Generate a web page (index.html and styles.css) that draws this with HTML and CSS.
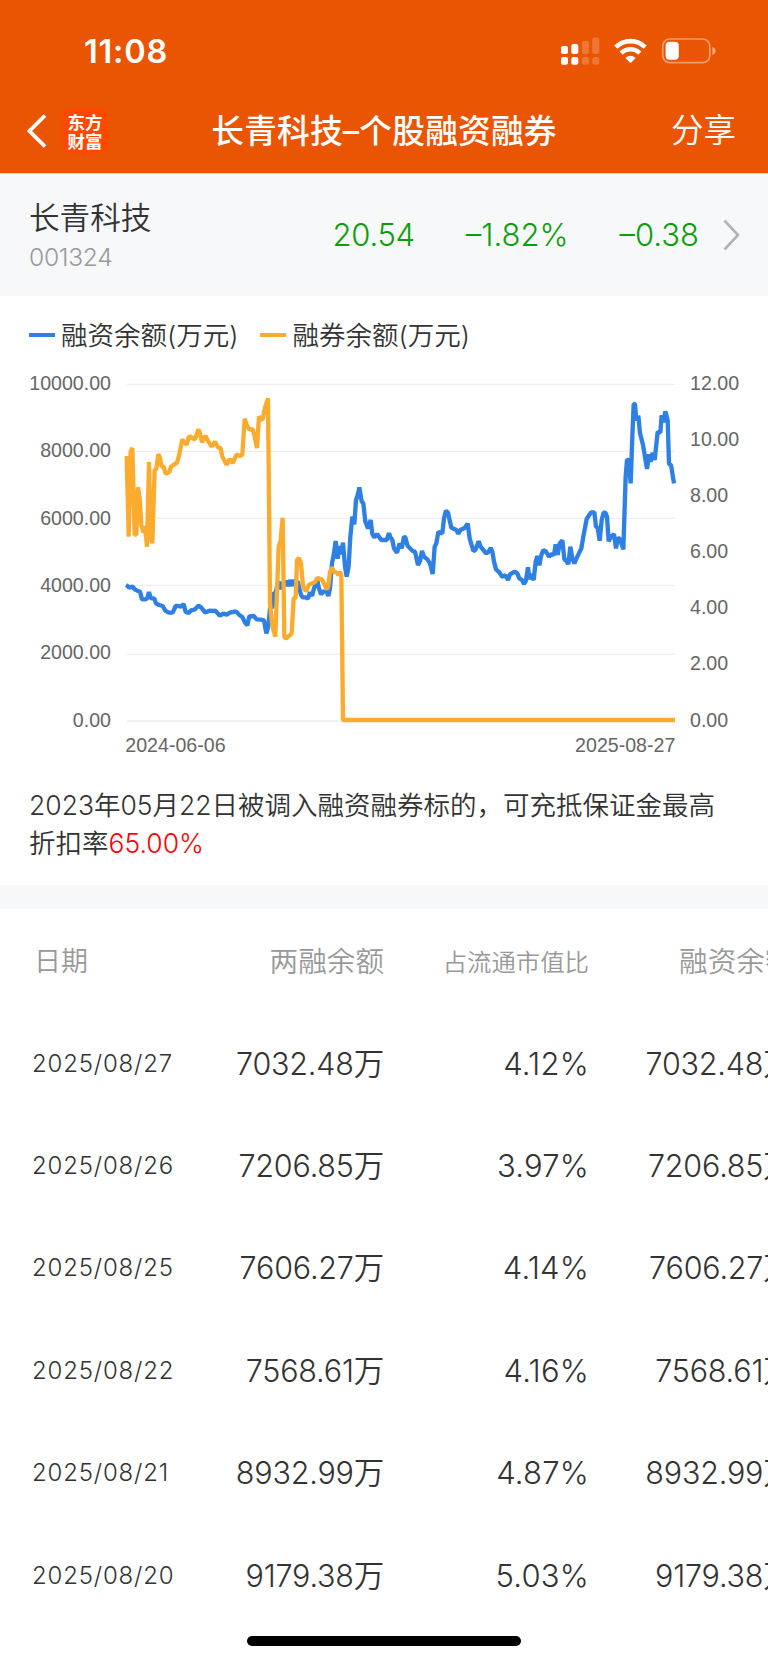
FILE: index.html
```html
<!DOCTYPE html>
<html lang="zh-CN">
<head>
    <meta charset="UTF-8">
    <meta name="viewport" content="width=device-width, initial-scale=1.0">
    <title>长青科技-个股融资融券</title>
    <link rel="stylesheet" href="styles.css">
</head>
<body>
    <header class="header">
        <div class="status-bar">
            <span class="status-time">11:08</span>
            <svg class="status-icons" viewBox="0 0 156 28" width="156" height="28">
                <!-- 信号 -->
                <g fill="#fff">
                    <rect x="0" y="9" width="7" height="8" rx="2"/>
                    <rect x="10.3" y="7" width="7" height="10" rx="2"/>
                    <rect x="0" y="20" width="7" height="7.7" rx="2"/>
                    <rect x="10.3" y="20" width="7" height="7.7" rx="2"/>
                </g>
                <g fill="#fff" fill-opacity=".2">
                    <rect x="21" y="4" width="7" height="13" rx="2"/>
                    <rect x="31.3" y="0.5" width="7" height="16.5" rx="2"/>
                    <rect x="21" y="20" width="7" height="7.7" rx="2"/>
                    <rect x="31.3" y="20" width="7" height="7.7" rx="2"/>
                </g>
                <!-- WiFi -->
                <g fill="none" stroke="#fff" stroke-width="4.6">
                    <path d="M54.8 10.1 A21 21 0 0 1 84.2 10.1"/>
                    <path d="M60.2 16.1 A13.2 13.2 0 0 1 78.8 16.1"/>
                </g>
                <path d="M64.4 21 Q69.5 16.6 74.6 21 L70.2 25.5 Q69.5 26.1 68.8 25.5 Z" fill="#fff"/>
                <!-- 电池 -->
                <rect x="101.8" y="2" width="47" height="23.6" rx="7" fill="none" stroke="#fff" stroke-opacity=".42" stroke-width="1.7"/>
                <rect x="104.6" y="4.8" width="13.2" height="18" rx="4" fill="#fff"/>
                <path d="M151.4 10 Q154.6 11.2 154.6 14 Q154.6 16.8 151.4 18 Z" fill="#fff" fill-opacity=".5"/>
            </svg>
        </div>
        <nav class="nav">
            <svg class="back" viewBox="0 0 20 34" width="20" height="34">
                <path d="M18 1.5 L2.5 17 L18 32.5" fill="none" stroke="#fff" stroke-width="3.8"/>
            </svg>
            <div class="logo"><span>东方</span><span>财富</span></div>
            <h1 class="title">长青科技–个股融资融券</h1>
            <span class="share">分享</span>
        </nav>
    </header>

    <section class="stock">
        <div class="stock-info">
            <div class="stock-name">长青科技</div>
            <div class="stock-code">001324</div>
        </div>
        <span class="quote price">20.54</span>
        <span class="quote percent">–1.82%</span>
        <span class="quote change">–0.38</span>
        <svg class="arrow" viewBox="0 0 17 32" width="17" height="32">
            <path d="M1.5 1.5 L15 16 L1.5 30.5" fill="none" stroke="#b3b3b3" stroke-width="2.6"/>
        </svg>
    </section>

    <section class="chart-card">
        <div class="legend">
            <span class="legend-item rz">融资余额(万元)</span>
            <span class="legend-item rq">融券余额(万元)</span>
        </div>
        <svg class="chart" viewBox="0 0 2304 1170">
            <g class="grid">
                <path d="M381 43H2025M381 244H2025M381 445H2025M381 646H2025M381 853H2025M381 1053H2025"/>
            </g>
            <g class="axis" text-anchor="end">
                <text x="333" y="60">10000.00</text>
                <text x="333" y="262">8000.00</text>
                <text x="333" y="464">6000.00</text>
                <text x="333" y="666">4000.00</text>
                <text x="333" y="868">2000.00</text>
                <text x="333" y="1070">0.00</text>
            </g>
            <g class="axis">
                <text x="2070" y="60">12.00</text>
                <text x="2070" y="228">10.00</text>
                <text x="2070" y="396">8.00</text>
                <text x="2070" y="565">6.00</text>
                <text x="2070" y="733">4.00</text>
                <text x="2070" y="901">2.00</text>
                <text x="2070" y="1070">0.00</text>
                <text x="376" y="1146">2024-06-06</text>
                <text x="2026" y="1146" text-anchor="end">2025-08-27</text>
            </g>
            <!-- 融资余额 -->
            <polyline class="line-rz" points="378,645 383,648 387,653 398,650 404,658 412,662 420,665 426,688 437,688 442,684 447,666 452,684 463,686 468,700 477,705 488,708 496,722 506,728 518,728 527,708 535,708 544,710 551,702 557,726 566,729 573,721 585,718 595,707 604,713 615,727 630,722 638,723 646,722 660,737 670,731 680,734 690,728 708,724 718,735 727,741 735,758 742,766 748,739 762,738 770,748 782,749 792,751 799,790 805,770 810,715 818,710 820,672 827,668 833,640 838,636 843,658 850,636 854,648 860,632 865,648 870,630 876,648 881,630 887,640 893,634 898,655 903,675 908,682 918,682 924,686 930,667 936,678 942,655 952,632 957,655 963,673 970,664 980,666 985,678 990,655 996,580 1001,555 1007,513 1013,566 1018,528 1023,553 1029,518 1035,590 1040,620 1046,588 1051,500 1057,440 1063,463 1068,390 1073,376 1078,352 1085,394 1090,400 1096,455 1104,475 1112,450 1117,492 1123,502 1131,492 1138,502 1144,510 1160,510 1167,490 1172,503 1177,510 1182,535 1191,548 1199,520 1205,535 1212,500 1216,502 1222,526 1230,535 1238,543 1245,545 1254,585 1260,573 1266,543 1272,560 1282,568 1290,580 1298,612 1304,530 1309,520 1315,486 1327,490 1332,445 1338,422 1344,428 1354,473 1368,479 1375,491 1381,480 1394,474 1403,461 1409,505 1420,543 1426,540 1436,514 1442,530 1458,550 1465,546 1472,534 1477,545 1482,575 1488,598 1498,607 1506,620 1516,616 1524,630 1530,613 1544,605 1552,610 1558,625 1566,630 1572,642 1578,632 1584,592 1588,628 1593,612 1601,630 1607,575 1612,558 1618,586 1624,555 1630,540 1638,545 1647,560 1655,552 1662,555 1667,523 1673,555 1679,520 1687,511 1693,568 1699,572 1705,583 1711,530 1717,565 1723,580 1732,560 1744,535 1750,500 1760,447 1773,427 1783,427 1788,470 1793,473 1799,512 1805,450 1811,428 1816,428 1821,440 1826,514 1832,502 1842,492 1848,535 1854,503 1860,508 1870,538 1877,320 1881,270 1886,270 1892,340 1897,200 1901,102 1905,102 1909,152 1915,137 1920,190 1929,225 1941,297 1947,253 1952,275 1958,248 1964,270 1973,185 1981,188 1985,136 1990,157 1996,124 2003,150 2007,282 2013,285 2022,340"/>
            <!-- 融券余额 -->
            <polyline class="line-rq" points="380,258 386,500 392,245 397,234 404,494 409,494 414,352 419,385 424,465 430,487 435,468 441,530 447,276 452,500 457,520 464,300 469,297 475,252 480,265 485,290 491,290 497,312 502,308 508,306 513,290 530,279 536,262 547,208 553,217 560,224 566,202 571,199 578,205 585,208 595,178 600,190 606,217 612,203 617,198 623,212 635,230 645,215 654,232 662,235 667,260 680,284 689,267 698,279 710,253 718,258 727,254 734,146 740,165 748,178 758,178 763,195 771,234 777,139 783,148 788,148 795,113 804,85 810,700 817,768 826,800 836,530 842,510 848,443 853,800 858,806 868,797 875,790 881,684 887,684 891,570 897,564 903,580 909,648 915,660 920,662 926,645 945,636 952,624 965,628 973,642 980,658 985,648 990,607 995,592 1003,606 1010,608 1015,615 1020,606 1024,615 1029,1050 2025,1050"/>
        </svg>
        <p class="note">2023年05月22日被调入融资融券标的，可充抵保证金最高折扣率<em>65.00%</em></p>
    </section>

    <section class="table">
        <div class="row head">
            <span>日期</span><span>两融余额</span><span class="small">占流通市值比</span><span>融资余额</span>
        </div>
        <div class="row"><span>2025/08/27</span><span>7032.48万</span><span class="pct">4.12%</span><span>7032.48万</span></div>
        <div class="row"><span>2025/08/26</span><span>7206.85万</span><span class="pct">3.97%</span><span>7206.85万</span></div>
        <div class="row"><span>2025/08/25</span><span>7606.27万</span><span class="pct">4.14%</span><span>7606.27万</span></div>
        <div class="row"><span>2025/08/22</span><span>7568.61万</span><span class="pct">4.16%</span><span>7568.61万</span></div>
        <div class="row"><span>2025/08/21</span><span>8932.99万</span><span class="pct">4.87%</span><span>8932.99万</span></div>
        <div class="row"><span>2025/08/20</span><span>9179.38万</span><span class="pct">5.03%</span><span>9179.38万</span></div>
    </section>

    <div class="home-bar"></div>
</body>
</html>
```
FILE: styles.css
```css
* {
    box-sizing: border-box;
    margin: 0;
    padding: 0;
}
body {
    width: 768px;
    height: 1663px;
    overflow: hidden;
    background: #fff;
    color: #333;
    font-family: Inter, "Noto Sans CJK SC", sans-serif;
    font-weight: 350;
    display: flex;
    flex-direction: column;
}

/* 顶部 */
.header {
    height: 174px;
    flex: none;
    background: #ea5504;
    border-bottom: 1px solid #f8cdb5;
    color: #fff;
}
.status-bar {
    height: 88px;
    padding: 15px 51px 0 84px;
    display: flex;
    align-items: center;
    justify-content: space-between;
}
.status-time {
    font-size: 32.5px;
    font-weight: 600;
    letter-spacing: 0.8px;
}
.status-icons {
    margin-top: -1px;
}
.nav {
    height: 86px;
    padding: 0 32px 0 27px;
    display: flex;
    align-items: center;
}
.logo {
    width: 46px;
    height: 46px;
    margin-left: 15px;
    border-radius: 10px;
    background: #ff4800;
    display: flex;
    flex-direction: column;
    align-items: center;
    justify-content: center;
    font-family: "Noto Sans CJK SC", sans-serif;
    font-size: 17.5px;
    font-weight: 700;
    line-height: 19px;
}
.title {
    flex: 1;
    margin-left: -11px;
    text-align: center;
    font-size: 32.7px;
    font-weight: 500;
    line-height: 44px;
    letter-spacing: 0.2px;
}
.share {
    font-size: 32.5px;
    line-height: 44px;
}

/* 股票行情 */
.stock {
    height: 122px;
    flex: none;
    padding: 0 28px 0 29px;
    background: #f7f8fa;
    display: flex;
    align-items: center;
}
.stock-info {
    flex: 1;
    padding-top: 1px;
}
.stock-name {
    font-size: 30.6px;
    line-height: 42px;
}
.stock-code {
    font-size: 24.6px;
    line-height: 36px;
    color: #999;
    letter-spacing: -0.3px;
}
.quote {
    margin-top: -1px;
    font-size: 31px;
    color: #0a9f0a;
}
.price {
    letter-spacing: -0.3px;
}
.percent {
    margin-left: 51px;
}
.change {
    margin-left: 51px;
}
.arrow {
    margin-left: 24px;
}

/* 图表 */
.chart-card {
    height: 589px;
    flex: none;
}
.legend {
    height: 74px;
    padding: 3px 29px 0;
    display: flex;
    align-items: center;
    gap: 22px;
}
.legend-item {
    font-size: 26.5px;
    line-height: 36px;
    display: flex;
    align-items: center;
    gap: 6px;
}
.legend-item::before {
    content: "";
    width: 26px;
    height: 4px;
    background: #2f80e4;
}
.legend-item.rq::before {
    background: #fbac2e;
}
.chart {
    display: block;
    width: 768px;
    height: 390px;
}
.grid path {
    stroke: #eeeeee;
    stroke-width: 4;
}
.axis {
    font-family: "Liberation Sans", sans-serif;
    font-size: 58.8px;
    font-weight: 400;
    fill: #666;
}
.line-rz,
.line-rq {
    fill: none;
    stroke: #2f80e4;
    stroke-width: 13;
    stroke-linejoin: bevel;
}
.line-rq {
    stroke: #fbac2e;
}
.note {
    padding: 27px 45px 0 29px;
    font-size: 26.5px;
    line-height: 37.6px;
}
.note em {
    font-style: normal;
    color: #f00;
}

/* 明细表 */
.table {
    flex: none;
    width: 792px;
    padding-top: 1px;
    border-top: 24px solid #f7f8fa;
}
.row {
    height: 102.4px;
    padding-left: 32px;
    display: grid;
    grid-template-columns: 150px 202px 205px 204.5px;
    align-items: center;
    text-align: right;
    font-size: 30.5px;
    line-height: 44px;
    letter-spacing: -0.2px;
}
.row span:first-child {
    text-align: left;
    font-size: 24px;
    letter-spacing: 0.8px;
}
.row .pct {
    font-size: 31px;
    letter-spacing: 0.2px;
}
.row.head {
    padding-top: 2px;
    font-size: 28.6px;
    letter-spacing: 0;
    color: #999;
}
.row.head span:first-child {
    padding-left: 2px;
    font-size: 27px;
    letter-spacing: 0;
}
.row.head .small {
    font-size: 24.4px;
    letter-spacing: 0;
}

.home-bar {
    position: absolute;
    left: 247px;
    top: 1636px;
    width: 274px;
    height: 10px;
    border-radius: 5px;
    background: #000;
}
```
